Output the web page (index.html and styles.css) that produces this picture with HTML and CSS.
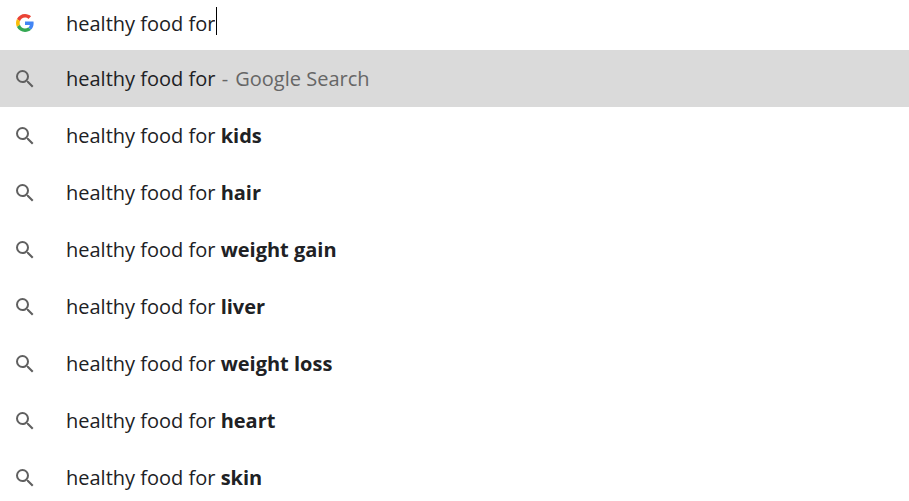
FILE: index.html
```html
<!DOCTYPE html>
<html lang="en">
<head>
<meta charset="utf-8">
<title>Search suggestions</title>
<link rel="stylesheet" href="styles.css">
</head>
<body>
<svg class="defs" aria-hidden="true">
  <symbol id="search" viewBox="0 0 24 24"><path d="M15.5 14h-.79l-.28-.27A6.47 6.47 0 0 0 16 9.500 6.500 6.500 0 1 0 9.500 16c1.610 0 3.090-.59 4.230-1.570l.27.28v.79l5 4.990L20.490 19l-4.990-5zm-6 0C7.010 14 5 11.990 5 9.500S7.010 5 9.500 5 14 7.010 14 9.500 11.990 14 9.500 14z"/></symbol>
</svg>
<form class="bar" role="search">
  <svg class="logo" viewBox="0 0 48 48" aria-hidden="true">
    <path fill="#ea4335" d="M24 9.500c3.540 0 6.710 1.220 9.210 3.600l6.850-6.850C35.900 2.380 30.470 0 24 0 14.620 0 6.510 5.380 2.560 13.220l7.980 6.190C12.430 13.720 17.740 9.500 24 9.500z"/>
    <path fill="#4285f4" d="M46.980 24.550c0-1.570-.15-3.090-.38-4.550H24v9.020h12.940c-.58 2.960-2.260 5.480-4.780 7.180l7.730 6c4.510-4.180 7.090-10.360 7.090-17.650z"/>
    <path fill="#fbbc05" d="M10.530 28.590c-.48-1.450-.76-2.990-.76-4.590s.27-3.140.76-4.590l-7.980-6.190C.92 16.460 0 20.120 0 24c0 3.880.92 7.540 2.560 10.780l7.970-6.190z"/>
    <path fill="#34a853" d="M24 48c6.480 0 11.930-2.130 15.890-5.810l-7.730-6c-2.150 1.450-4.920 2.300-8.160 2.300-6.260 0-11.570-4.220-13.470-9.910l-7.980 6.190C6.510 42.620 14.620 48 24 48z"/>
  </svg>
  <label class="field"><input class="query" type="text" aria-label="Search" value="healthy food for" autocomplete="off"><span class="caret"></span></label>
</form>
<ul class="list">
  <li><a class="row selected" href="#"><svg class="icon" aria-hidden="true"><use href="#search"/></svg><span>healthy food for <span class="hint"><span class="dash">-</span> Google Search</span></span></a></li>
  <li><a class="row" href="#"><svg class="icon" aria-hidden="true"><use href="#search"/></svg><span>healthy food for <b>kids</b></span></a></li>
  <li><a class="row" href="#"><svg class="icon" aria-hidden="true"><use href="#search"/></svg><span>healthy food for <b>hair</b></span></a></li>
  <li><a class="row" href="#"><svg class="icon" aria-hidden="true"><use href="#search"/></svg><span>healthy food for <b>weight gain</b></span></a></li>
  <li><a class="row" href="#"><svg class="icon" aria-hidden="true"><use href="#search"/></svg><span>healthy food for <b>liver</b></span></a></li>
  <li><a class="row" href="#"><svg class="icon" aria-hidden="true"><use href="#search"/></svg><span>healthy food for <b>weight loss</b></span></a></li>
  <li><a class="row" href="#"><svg class="icon" aria-hidden="true"><use href="#search"/></svg><span>healthy food for <b>heart</b></span></a></li>
  <li><a class="row" href="#"><svg class="icon" aria-hidden="true"><use href="#search"/></svg><span>healthy food for <b>skin</b></span></a></li>
</ul>
</body>
</html>
```
FILE: styles.css
```css
* { box-sizing: border-box; }
body {
  margin: 0;
  background: #fff;
  color: #202124;
  font: 20px/28px "Segoe UI", "Open Sans", "Noto Sans", sans-serif;
}
.defs { display: none; }
.bar {
  display: flex;
  align-items: center;
  gap: 32px;
  padding: 7px 16px 11px;
}
.logo { width: 18px; height: 18px; flex: none; }
.field { display: flex; align-items: center; gap: 1px; height: 32px; }
.query {
  field-sizing: content;
  border: 0;
  padding: 2px 0 0;
  outline: 0;
  background: none;
  color: inherit;
  font: inherit;
}
.caret { align-self: flex-start; width: 1px; height: 28px; background: #000; }
.list { list-style: none; margin: 0; padding: 0; }
.row {
  display: flex;
  align-items: center;
  gap: 29px;
  min-height: 57px;
  padding: 0 13px;
  color: inherit;
  text-decoration: none;
}
.selected { background: #dadada; }
.icon { width: 24px; height: 24px; flex: none; fill: #606060; }
.hint { color: #666; }
.dash { margin: 0 2px 0 1px; }
b { font-weight: 700; }
```
